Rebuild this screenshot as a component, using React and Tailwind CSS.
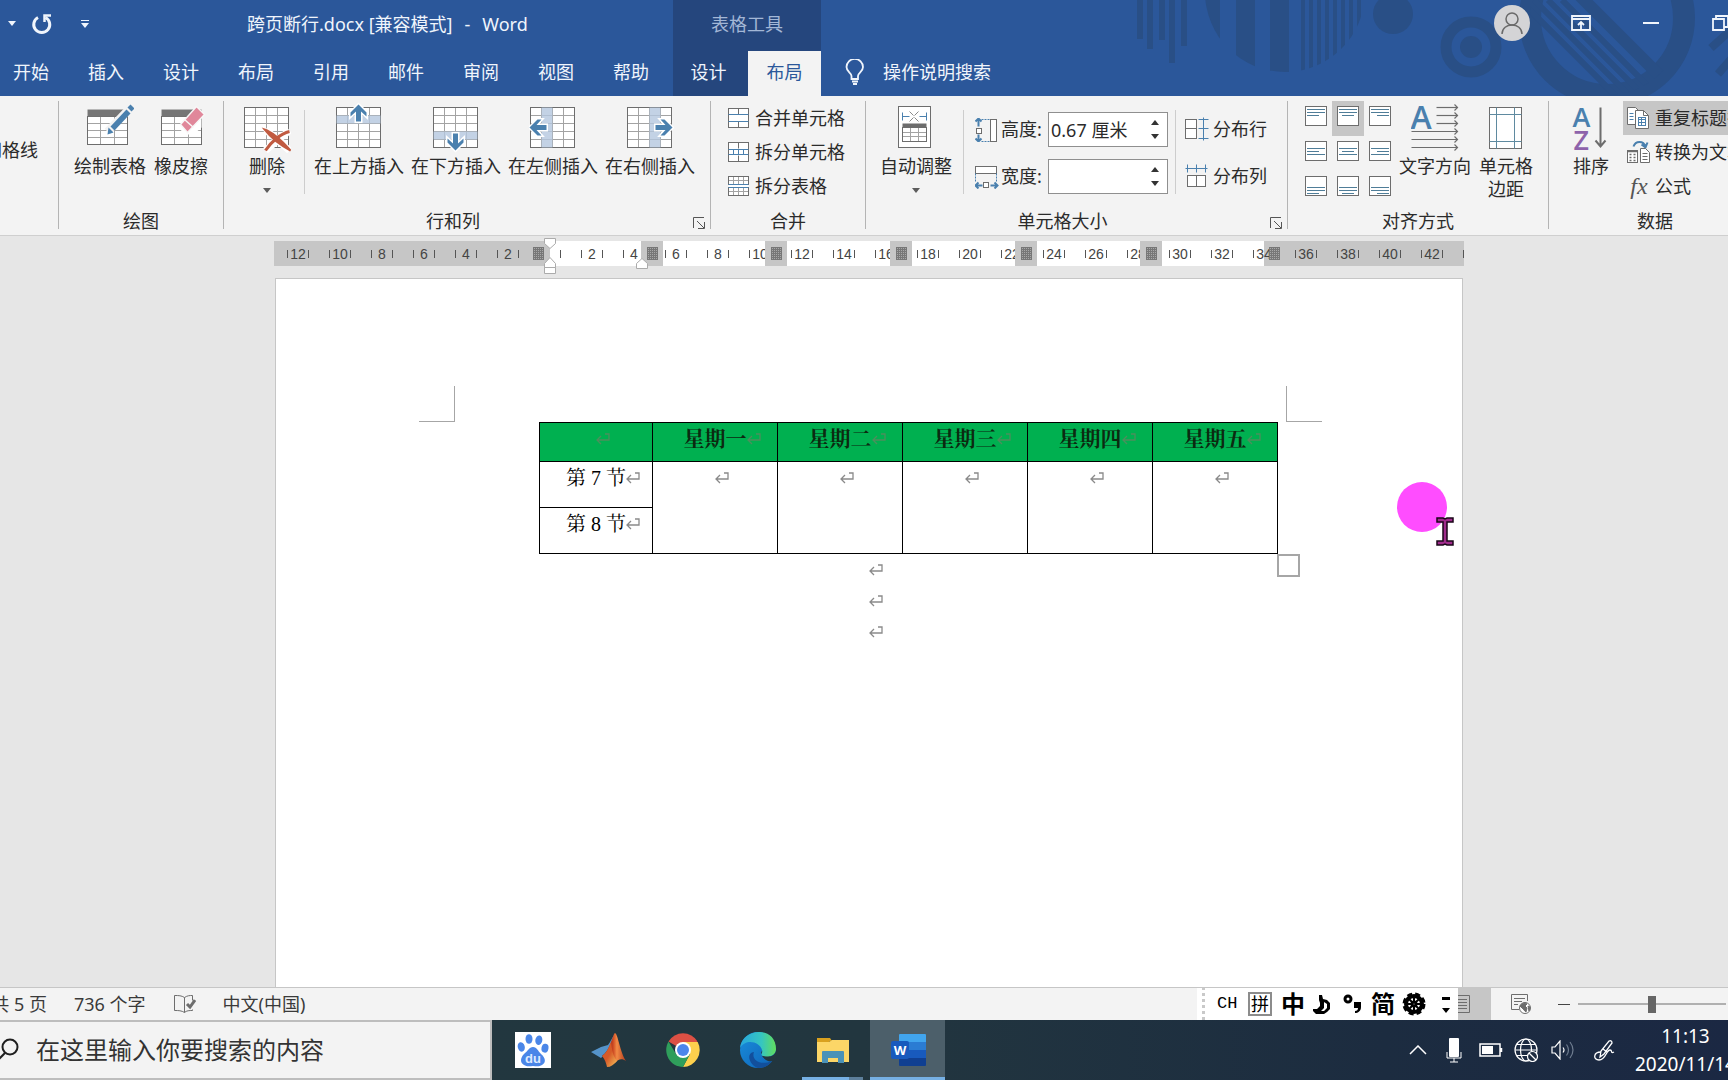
import React, { useState } from "react";

const MENU_TABS = ["开始", "插入", "设计", "布局", "引用", "邮件", "审阅", "视图", "帮助"];
const WEEK_DAYS = ["星期一", "星期二", "星期三", "星期四", "星期五"];

// Ruler numbers run from -12 to 42 in steps of two characters
const RULER_STEPS = Array.from({ length: 29 }, (_, i) => i * 2 - 12);

const INK = "#6d6d6d";
const BLUE = "#4a80ae";

/* ---------- icons ---------- */

const Grid = ({ x, y, w, h, cols, rows, line = "#a3a3a3" }) => (
  <g fill="none">
    {Array.from({ length: cols - 1 }, (_, i) => (
      <path
        key={`c${i}`}
        stroke={line}
        d={`M${Math.round(x + ((i + 1) * w) / cols)} ${y}v${h}`}
      />
    ))}
    {Array.from({ length: rows - 1 }, (_, i) => (
      <path
        key={`r${i}`}
        stroke={line}
        d={`M${x} ${Math.round(y + ((i + 1) * h) / rows)}h${w}`}
      />
    ))}
    <rect x={x} y={y} width={w} height={h} stroke={INK} />
  </g>
);

const BigIcon = ({ children }) => (
  <svg className="h-[54px] w-12 shrink-0" viewBox="0.5 0.5 48 54">
    {children}
  </svg>
);

const DrawTableIcon = () => (
  <BigIcon>
    <rect x="2" y="9" width="40" height="35" fill="#fff" />
    <Grid x={2} y={16} w={40} h={28} cols={3} rows={4} />
    <rect x="2" y="9" width="40" height="7" fill="#767676" />
    <path d="M22 31 45 7" stroke="#f3f3f3" strokeWidth="8" />
    <path d="m25 26 16-17 4 4-16 17z" fill={BLUE} />
    <path d="m23 27 5 5-6 2z" fill={BLUE} />
    <path d="m42 7 3-3 4 4-3 3z" fill={BLUE} />
  </BigIcon>
);

const EraserIcon = () => (
  <BigIcon>
    <rect x="5" y="9" width="40" height="35" fill="#fff" />
    <Grid x={5} y={16} w={40} h={28} cols={3} rows={4} />
    <rect x="5" y="9" width="40" height="7" fill="#767676" />
    <path d="M27 17h18v10l-8 7H24z" fill="#fff" />
    <path d="M24 24 40 6l8 8-17 18z" fill="#e0879a" stroke="#f7f7f7" strokeWidth="1.5" />
    <path d="m28 19 9 8" stroke="#f7f7f7" strokeWidth="1.5" />
  </BigIcon>
);

const DeleteIcon = () => (
  <BigIcon>
    <rect x="2" y="7" width="44" height="40" fill="#fff" />
    <Grid x={2} y={7} w={44} h={40} cols={4} rows={5} />
    <path d="m23 29 24 21M47 30 23 50" stroke="#fff" strokeWidth="7" />
    <path d="M22 29c9 3 18 12 26 21-10-5-19-12-26-21z" fill="#c15b41" stroke="#c15b41" strokeWidth="2" />
    <path d="M47 31c-9 2-19 11-24 19" fill="none" stroke="#c15b41" strokeWidth="3" />
  </BigIcon>
);

const UP_ARROW = "M0 -8 8 0V4L2.500 -1V9h-5V-1L-8 4V0z";

const InsertIcon = ({ side }) => {
  const band = {
    top: [2, 15, 44, 8],
    bottom: [2, 31, 44, 8],
    left: [13, 7, 11, 40],
    right: [24, 7, 11, 40],
  }[side];
  const arrow = {
    top: "translate(24 12)",
    bottom: "translate(24 42) rotate(180)",
    left: "translate(9 27) rotate(-90)",
    right: "translate(39 27) rotate(90)",
  }[side];
  return (
    <BigIcon>
      <rect x="2" y="7" width="44" height="40" fill="#fff" />
      <Grid x={2} y={7} w={44} h={40} cols={4} rows={5} />
      <rect x={band[0]} y={band[1]} width={band[2]} height={band[3]} fill="#b4c7df" fillOpacity="0.8" />
      <path d={UP_ARROW} transform={arrow} fill={BLUE} stroke="#fff" strokeWidth="3" paintOrder="stroke" />
    </BigIcon>
  );
};

const AutoFitIcon = () => (
  <BigIcon>
    <rect x="7" y="6" width="32" height="41" fill="#fff" stroke={INK} />
    <path d="M11 12v8M35 12v8M11 16h7M35 16h-7" stroke={BLUE} />
    <path d="m18 11 4 4M27 11l-4 4M18 21l4-4M27 21l-4-4" stroke="#8a8a8a" />
    <rect x="11" y="23" width="24" height="4" fill="#6d6d6d" />
    <Grid x={11} y={27} w={24} h={14} cols={3} rows={3} />
  </BigIcon>
);

const TextDirectionIcon = () => (
  <BigIcon>
    <text x="0" y="28" fontSize="32" fontWeight="600" fill={BLUE} fontFamily="'Open Sans', sans-serif">
      A
    </text>
    {[7, 15, 23, 31, 39, 47].map((y, i) => (
      <g key={y} stroke={INK} strokeWidth="1.200" fill="none">
        <path d={i < 3 ? `M26 ${y}h21` : `M1 ${y}h46`} />
        <path d={`m44 ${y - 3} 3 3-3 3`} />
      </g>
    ))}
  </BigIcon>
);

const CellMarginIcon = () => (
  <BigIcon>
    <rect x="8" y="7" width="32" height="41" fill="#fff" stroke={INK} />
    <path d="M15 7v41M33 7v41M8 14h32M8 41h32" stroke="#5f8aa0" />
  </BigIcon>
);

const SortIcon = () => (
  <BigIcon>
    <g fontFamily="'Open Sans', sans-serif" fontSize="27" fontWeight="600">
      <text x="6" y="26" fill={BLUE}>
        A
      </text>
      <text x="7" y="49" fill="#8e63ab">
        Z
      </text>
    </g>
    <path d="M34 7v38M29 40l5 6 5-6" fill="none" stroke="#6d6d6d" strokeWidth="2" />
  </BigIcon>
);

const SmallIcon = ({ children }) => (
  <svg className="h-6 w-6 shrink-0" viewBox="0.5 0.5 24 24">
    {children}
  </svg>
);

const MergeCellsIcon = () => (
  <SmallIcon>
    <rect x="2" y="3" width="20" height="19" fill="#fff" stroke={INK} />
    <path d="M12 3v6M12 16v6" stroke={INK} />
    <path d="M2 9h20M2 16h20" stroke={BLUE} />
  </SmallIcon>
);

const SplitCellsIcon = () => (
  <SmallIcon>
    <rect x="2" y="3" width="20" height="19" fill="#fff" stroke={INK} />
    <path d="M12 3v6M12 16v6" stroke={INK} />
    <path d="M2 10h20M2 15h20M7 10v5M12 10v5M17 10v5" stroke={BLUE} />
  </SmallIcon>
);

const SplitTableIcon = () => (
  <SmallIcon>
    <rect x="2" y="3" width="20" height="19" fill="#fff" />
    <Grid x={2} y={3} w={20} h={8} cols={4} rows={2} />
    <Grid x={2} y={14} w={20} h={8} cols={4} rows={2} />
    <path d="M2 11h20M2 14h20" stroke={BLUE} />
  </SmallIcon>
);

const RowHeightIcon = () => (
  <SmallIcon>
    <path d="M4 1v8M4 17v7M1 4l3-3 3 3M1 21l3 3 3-3" fill="none" stroke={BLUE} strokeWidth="2" />
    <rect x="2" y="11" width="5" height="5" fill="#fff" stroke={INK} />
    <path d="M7 2h9M7 24h9" stroke={BLUE} strokeDasharray="2 1" />
    <rect x="16" y="2" width="6" height="22" fill="#fff" stroke={INK} />
  </SmallIcon>
);

const ColWidthIcon = () => (
  <SmallIcon>
    <rect x="1" y="2" width="21" height="7" fill="#fff" stroke={INK} />
    <path d="M1 9v9M22 9v9" stroke={BLUE} strokeDasharray="2 1" />
    <path d="M1 21h7M16 21h7M4 18l-3 3 3 3M20 18l3 3-3 3" fill="none" stroke={BLUE} strokeWidth="2" />
    <rect x="9" y="18" width="5" height="5" fill="#fff" stroke={INK} />
  </SmallIcon>
);

const DistributeRowsIcon = () => (
  <SmallIcon>
    <rect x="1" y="3" width="11" height="19" fill="#fff" stroke={INK} />
    <path d="M1 12h11" stroke={INK} />
    <path d="M19 1v23M14 3h10M14 12h10M14 22h10" stroke={BLUE} />
  </SmallIcon>
);

const DistributeColsIcon = () => (
  <SmallIcon>
    <path d="M1 5h22M3 1v8M12 1v8M21 1v8" stroke={BLUE} />
    <rect x="3" y="12" width="18" height="11" fill="#fff" stroke={INK} />
    <path d="M12 12v11" stroke={INK} />
  </SmallIcon>
);

// Line layouts for the nine alignment buttons
const ALIGN_LINES = {
  top: [3, 6, 9],
  middle: [7, 10, 13],
  bottom: [11, 14, 17],
};

const AlignIcon = ({ v, h }) => (
  <svg className="h-5 w-[22px]" viewBox="0 0 22 20">
    <rect x="0.5" y="0.500" width="21" height="19" fill="#fff" stroke={INK} />
    {ALIGN_LINES[v].map((y, i) => {
      const w = v === "middle" ? (i === 1 ? 12 : 18) : i === 1 ? 18 : i === 0 ? 18 : 12;
      const x = h === "left" ? 2 : h === "right" ? 20 - w : 11 - w / 2;
      return <path key={y} d={`M${x} ${y + 0.5}h${w}`} stroke="#4f7d98" />;
    })}
  </svg>
);

const RepeatHeaderIcon = () => (
  <SmallIcon>
    <path d="M1 2h8l3 3v14H1z" fill="#fff" stroke={INK} />
    <path d="M3 8h4M3 11h4M3 14h4" stroke={BLUE} />
    <path d="M9 5h8l5 5v13H9z" fill="#fff" stroke={INK} />
    <path d="M17 5v5h5" fill="none" stroke={INK} />
    <rect x="12" y="12" width="7" height="8" fill="none" stroke={BLUE} />
    <path d="M12 14h7M12 17h7M15 12v8" stroke={BLUE} />
  </SmallIcon>
);

const ConvertTextIcon = () => (
  <SmallIcon>
    <path d="M7 7c2-6 10-6 12 0M15 5l4 3 2-5" fill="none" stroke={BLUE} strokeWidth="2" />
    <rect x="1" y="11" width="10" height="12" fill="#fff" stroke={INK} />
    <path d="M1 12h10M3 15h2M7 15h2M3 18h2M7 18h2M3 21h2M7 21h2" stroke={INK} strokeWidth="1.5" />
    <path d="M14 9h5l4 4v10h-9z" fill="#fff" stroke={INK} />
    <path d="M16 14h5M16 17h5M16 20h5" stroke={INK} />
  </SmallIcon>
);

const EnterMark = ({ className = "text-[#8a8a8a]" }) => (
  <span className="inline-block w-0">
    <svg
      className={`h-3 w-[14px] max-w-none ${className}`}
      viewBox="0 0 14 12"
      fill="none"
      stroke="currentColor"
      strokeWidth="1.3"
    >
      <path d="M9 1h4v6H1M5 3 1 7l4 4" />
    </svg>
  </span>
);

/* ---------- ribbon pieces ---------- */

const LargeButton = ({ icon, label, caret, className = "" }) => (
  <button className={`flex shrink-0 flex-col items-center ${className}`}>
    {icon}
    <span className="leading-[23px] whitespace-pre">{label}</span>
    {caret && (
      <svg className="mt-[10px] h-[5px] w-2" viewBox="0 0 8 5">
        <path d="m0 0 4 5 4-5z" fill="#5c5c5c" />
      </svg>
    )}
  </button>
);

const SmallButton = ({ icon, label, className = "" }) => (
  <button className={`flex h-[34px] items-center gap-1 pb-px whitespace-nowrap ${className}`}>
    {icon}
    <span>{label}</span>
  </button>
);

const Launcher = () => (
  <button aria-label="更多选项" className="absolute right-[5px] bottom-[6px]">
    <svg className="h-3 w-3" viewBox="0 0 12 12" fill="none" stroke="#555">
      <path d="M0.500 11V0.500H11M4 4l7 7M11.500 5v6.500H5" />
    </svg>
  </button>
);

const Group = ({ label, className, launcher, children }) => (
  <>
    <section className={`relative flex shrink-0 flex-col pt-[5px] ${className}`}>
      <div className="flex h-[109px] items-start">{children}</div>
      <div className={`h-[22px] text-center leading-[22px] ${launcher ? "pr-7" : ""}`}>{label}</div>
      {launcher && <Launcher />}
    </section>
    <div className="mt-[5px] mb-[6px] w-px shrink-0 bg-[#b4b4b4] last:hidden" />
  </>
);

const ShortLine = ({ className }) => (
  <div className={`mt-[9px] h-[84px] w-px shrink-0 bg-[#cdcdcd] ${className}`} />
);

const SizeField = ({ id, icon, label, value, onChange }) => (
  <div className="flex h-[35px] items-center">
    {icon}
    <label htmlFor={id} className="ml-[2px] w-[47px] pb-[2px]">
      {label}
    </label>
    <div className="flex h-[35px] w-[120px] border border-[#8f8f8f] bg-white">
      <input
        id={id}
        value={value}
        onChange={(e) => onChange(e.target.value)}
        className="w-24 min-w-0 bg-transparent px-[2px] outline-none"
      />
      <div className="flex w-6 flex-col items-center justify-center gap-[9px]">
        <button aria-label="增加">
          <svg className="h-[5px] w-2" viewBox="0 0 8 5">
            <path d="M0 5 4 0l4 5z" fill="#333" />
          </svg>
        </button>
        <button aria-label="减少">
          <svg className="h-[5px] w-2" viewBox="0 0 8 5">
            <path d="m0 0 4 5 4-5z" fill="#333" />
          </svg>
        </button>
      </div>
    </div>
  </div>
);

/* ---------- header ---------- */

const HeaderArt = () => (
  <svg className="absolute top-0 right-0 h-24 w-[600px]" viewBox="1128 0 600 96">
    <defs>
      <clipPath id="stripeDisc">
        <circle cx="1285" cy="-8" r="80" />
      </clipPath>
      <clipPath id="bigDisc">
        <circle cx="1607" cy="18" r="77" />
      </clipPath>
    </defs>
    <g fill="#294f86">
      <path d="M1137 0h6v39h-6zM1147 0h6v49h-6zM1159 0h6v40h-6zM1169 0h6v63h-6zM1181 0h6v46h-6z" />
      <g clipPath="url(#stripeDisc)">
        <path d="M1200 0h20v72h-20zM1236 0h19v72h-19zM1270 0h19v72h-19z" />
        {[1301, 1309, 1317, 1325, 1333, 1341, 1349, 1357].map((x) => (
          <rect key={x} x={x} y="0" width="4" height="72" />
        ))}
      </g>
      <circle cx="1393" cy="14" r="20" />
      <circle cx="1471" cy="47" r="11" />
    </g>
    <g fill="none" stroke="#294f86">
      <circle cx="1471" cy="47" r="25" strokeWidth="11" />
      <circle cx="1607" cy="18" r="77" strokeWidth="22" />
      <g clipPath="url(#bigDisc)" strokeWidth="6">
        <path d="m1520 0 100 100M1534 0l100 100M1548 0l100 100M1562 0l100 100" />
        <path d="m1580-4 100 100" strokeWidth="12" />
      </g>
      <path d="m1711 48 20-18M1718 74l14-16" strokeWidth="8" />
    </g>
  </svg>
);

const Header = () => (
  <header className="relative flex h-24 shrink-0 overflow-hidden bg-[#2b579a] text-[#f0f5fc]">
    <HeaderArt />
    <div className="relative w-[673px] shrink-0">
      <div className="flex h-[51px] items-center pb-1">
        <button aria-label="撤消选项" className="ml-2 w-2">
          <svg className="h-[5px] w-2" viewBox="0 0 8 5">
            <path d="m0 0 4 5 4-5z" fill="currentColor" />
          </svg>
        </button>
        <button aria-label="重复" className="ml-[15px]">
          <svg className="h-[22px] w-[22px]" viewBox="0 0 22 22" fill="none" stroke="currentColor" strokeWidth="3">
            <path d="M7 4.500a8 8 0 1 0 7.500 0" />
            <path d="M20 2.500h-6.500V9" strokeWidth="2.500" />
          </svg>
        </button>
        <button aria-label="自定义快速访问工具栏" className="ml-7">
          <svg className="h-2 w-2" viewBox="0 0 8 8" fill="currentColor">
            <path d="M0 0h8v1H0zM0 3h8L4 8z" />
          </svg>
        </button>
        <h1 className="ml-[158px] flex gap-3 whitespace-nowrap">
          <span>跨页断行.docx [兼容模式]</span>
          <span>-</span>
          <span>Word</span>
        </h1>
      </div>
      <nav className="flex h-[45px] items-center gap-[39px] pb-1 pl-[13px]">
        {MENU_TABS.map((tab) => (
          <button key={tab} className="w-9 shrink-0">
            {tab}
          </button>
        ))}
      </nav>
    </div>
    <div className="relative w-[148px] shrink-0 bg-[#25467d]">
      <div className="flex h-[51px] items-center justify-center pb-1 text-[#a3b7d6]">表格工具</div>
      <div className="flex h-[45px]">
        <button className="w-[75px] pr-1 pb-1">设计</button>
        <button className="w-[73px] bg-[#f3f3f3] pb-1 text-[#2b579a]">布局</button>
      </div>
    </div>
    <div className="relative flex min-w-0 flex-1 flex-col overflow-hidden">
      <div className="flex h-[51px] shrink-0 items-center justify-end pb-[5px]">
        <button aria-label="账户" className="h-9 w-9 rounded-full bg-[#d4d4d6]">
          <svg className="h-9 w-9" viewBox="0 0 36 36" fill="none" stroke="#6a6a6a" strokeWidth="1.500">
            <circle cx="18" cy="14" r="6" />
            <path d="M8 29c0-12 20-12 20 0" />
          </svg>
        </button>
        <button aria-label="功能区显示选项" className="ml-[41px]">
          <svg className="h-4 w-5" viewBox="0 0 20 16" fill="none" stroke="currentColor" strokeWidth="1.800">
            <path d="M1 1h18v14H1zM1 4h18M10 14V7M7 10l3-3 3 3" />
          </svg>
        </button>
        <button aria-label="最小化" className="ml-[52px] flex h-4 w-4 items-center">
          <span className="h-[2px] w-full bg-current" />
        </button>
        <button aria-label="还原" className="ml-[53px] h-4 w-4">
          <svg className="h-4 w-4" viewBox="0 0 16 16" fill="none" stroke="currentColor" strokeWidth="1.800">
            <path d="M1 4h11v11H1zM4 4V1h12v11h-4" />
          </svg>
        </button>
      </div>
      <button className="flex h-[45px] items-center gap-[18px] pb-1 pl-6">
        <svg className="h-[26px] w-5" viewBox="0 0 20 26" fill="none" stroke="currentColor" strokeWidth="1.800">
          <path d="M6.500 20v-3c0-3-5-4-5-9a8.200 8 0 0 1 16.500 0c0 5-5 6-5 9v3z" />
          <path d="M7 22.500h6M8 25h4" />
        </svg>
        <span>操作说明搜索</span>
      </button>
    </div>
  </header>
);

/* ---------- ribbon ---------- */

const Ribbon = () => {
  const [height, setHeight] = useState("0.67 厘米");
  const [width, setWidth] = useState("");

  return (
    <div className="flex h-[140px] shrink-0 overflow-hidden border-b border-[#cfcfcf] bg-[#f3f3f3] text-[#2b2b2b]">
      <Group label="" className="w-[58px]">
        <button className="flex h-[98px] w-[38px] items-center justify-end whitespace-nowrap">网格线</button>
      </Group>

      <Group label="绘图" className="w-[164px]">
        <LargeButton icon={<DrawTableIcon />} label="绘制表格" className="ml-[15px]" />
        <LargeButton icon={<EraserIcon />} label="橡皮擦" className="ml-2" />
      </Group>

      <Group label="行和列" className="w-[486px]" launcher>
        <LargeButton icon={<DeleteIcon />} label="删除" caret className="ml-[19px] w-12" />
        <ShortLine className="ml-[13px]" />
        <div className="ml-[9px] flex gap-[7px]">
          <LargeButton icon={<InsertIcon side="top" />} label="在上方插入" />
          <LargeButton icon={<InsertIcon side="bottom" />} label="在下方插入" />
          <LargeButton icon={<InsertIcon side="left" />} label="在左侧插入" />
          <LargeButton icon={<InsertIcon side="right" />} label="在右侧插入" />
        </div>
      </Group>

      <Group label="合并" className="w-[154px]">
        <div className="ml-4 flex flex-col">
          <SmallButton icon={<MergeCellsIcon />} label="合并单元格" />
          <SmallButton icon={<SplitCellsIcon />} label="拆分单元格" />
          <SmallButton icon={<SplitTableIcon />} label="拆分表格" />
        </div>
      </Group>

      <Group label="单元格大小" className="w-[421px]" launcher>
        <LargeButton icon={<AutoFitIcon />} label="自动调整" caret className="ml-[14px]" />
        <ShortLine className="ml-[11px]" />
        <div className="mt-[11px] ml-[11px] flex flex-col gap-3">
          <SizeField id="row-height" icon={<RowHeightIcon />} label="高度:" value={height} onChange={setHeight} />
          <SizeField id="col-width" icon={<ColWidthIcon />} label="宽度:" value={width} onChange={setWidth} />
        </div>
        <ShortLine className="ml-[7px]" />
        <div className="mt-[11px] ml-[9px] flex flex-col gap-[13px]">
          <SmallButton icon={<DistributeRowsIcon />} label="分布行" />
          <SmallButton icon={<DistributeColsIcon />} label="分布列" />
        </div>
      </Group>

      <Group label="对齐方式" className="w-[260px]">
        <div className="ml-3 grid grid-cols-[32px_32px_32px]">
          {["top", "middle", "bottom"].map((v) =>
            ["left", "center", "right"].map((h) => (
              <button
                key={v + h}
                aria-label={`${v} ${h}`}
                className={`flex h-[35px] justify-center pt-[5px] ${
                  v === "top" && h === "center" ? "bg-[#c6c6c6]" : ""
                }`}
              >
                <AlignIcon v={v} h={h} />
              </button>
            ))
          )}
        </div>
        <LargeButton icon={<TextDirectionIcon />} label="文字方向" className="ml-[3px]" />
        <LargeButton icon={<CellMarginIcon />} label={"单元格\n边距"} className="ml-2" />
      </Group>

      <Group label="数据" className="w-[212px]">
        <LargeButton icon={<SortIcon />} label="排序" className="ml-[18px] w-12" />
        <div className="ml-2 flex flex-1 flex-col">
          <SmallButton icon={<RepeatHeaderIcon />} label="重复标题行" className="bg-[#c6c6c6] pl-1" />
          <SmallButton icon={<ConvertTextIcon />} label="转换为文本" className="pl-1" />
          <SmallButton
            icon={
              <span className="w-6 font-['Liberation_Serif',serif] text-2xl leading-6 text-[#555] italic">fx</span>
            }
            label="公式"
            className="pl-1"
          />
        </div>
      </Group>
    </div>
  );
};

/* ---------- ruler ---------- */

const ColumnDots = () => (
  <span className="h-[13px] w-[11px] bg-[#a8a8a8] bg-[repeating-linear-gradient(0deg,#777_0_1px,transparent_1px_2px),repeating-linear-gradient(90deg,#777_0_1px,transparent_1px_2px)]" />
);

const COLUMN_STOPS = [
  "left-[367px]",
  "left-[491px]",
  "left-[616px]",
  "left-[741px]",
  "left-[866px]",
];

const Ruler = () => (
  <div className="relative h-[25px] w-[1190px] shrink-0">
    <div className="flex h-full overflow-hidden bg-[linear-gradient(90deg,#c6c6c6_276px,#fff_276px,#fff_990px,#c6c6c6_990px)] pl-[3px]">
      {RULER_STEPS.map((n) => (
        <span key={n} className="flex w-[42px] shrink-0 items-center justify-center">
          <span className="flex h-2 w-[22px] items-center justify-center border-x border-[#555] font-['Liberation_Sans',sans-serif] text-sm text-[#444]">
            {n === 0 ? "" : Math.abs(n)}
          </span>
        </span>
      ))}
    </div>
    <span className="absolute top-[6px] left-[259px] flex">
      <ColumnDots />
    </span>
    {COLUMN_STOPS.map((pos) => (
      <span
        key={pos}
        className={`absolute top-0 flex h-[25px] w-[22px] items-center justify-center bg-[#c6c6c6] ${pos}`}
      >
        <ColumnDots />
      </span>
    ))}
    <span className="absolute top-[6px] left-[995px] flex">
      <ColumnDots />
    </span>
    <svg
      className="absolute -top-[3px] left-[270px] h-9 w-3"
      viewBox="0 0 12 36"
      fill="#fff"
      stroke="#ababab"
    >
      <path d="M0.500 0.500h11v5L6 10.500 0.500 5.500zM0.500 29.500v-4L6 19.500l5.500 6v4zM0.500 29.500h11v6H0.500z" />
    </svg>
    <svg className="absolute top-[17px] left-[362px] h-[11px] w-3" viewBox="0 0 12 11" fill="#fff" stroke="#ababab">
      <path d="M0.500 10.500v-5L6 0.500l5.500 5v5z" />
    </svg>
  </div>
);

/* ---------- document ---------- */

const Cell = ({ as: Tag = "td", className = "", rowSpan, children, mark }) => (
  <Tag rowSpan={rowSpan} className={`border border-black p-0 align-top ${className}`}>
    <div className="flex h-8 items-center justify-center">
      {children}
      <EnterMark className={mark} />
    </div>
  </Tag>
);

const Timetable = () => (
  <div className="relative ml-[263px] w-[738px] font-['Liberation_Serif','Noto_Serif_CJK_SC','Noto_Sans_CJK_SC',serif] text-black">
    <table className="w-full table-fixed border-collapse">
      <colgroup>
        <col className="w-[113px]" />
        {WEEK_DAYS.map((d) => (
          <col key={d} className="w-[125px]" />
        ))}
      </colgroup>
      <thead>
        <tr className="h-[39px] bg-[#00b050] text-[21px] text-[#0c2a10]">
          <Cell mark="text-[#4c8f5c]" />
          {WEEK_DAYS.map((day) => (
            <Cell key={day} as="th" mark="text-[#4c8f5c]">
              {day}
            </Cell>
          ))}
        </tr>
      </thead>
      <tbody className="text-xl">
        <tr className="h-[46px]">
          <Cell>第 7 节</Cell>
          {WEEK_DAYS.map((day) => (
            <Cell key={day} rowSpan={2} />
          ))}
        </tr>
        <tr className="h-[46px]">
          <Cell>第 8 节</Cell>
        </tr>
      </tbody>
    </table>
    <span className="absolute top-full left-full h-[23px] w-[23px] border-2 border-[#a6a6a6]" />
  </div>
);

const Page = () => (
  <main className="relative mt-3 w-[1188px] flex-1 border border-b-0 border-[#c6c6c6] bg-white pt-[107px]">
    <div className="flex justify-between pr-[140px] pl-[143px]">
      <span className="h-9 w-9 border-r border-b border-[#a6a6a6]" />
      <span className="h-9 w-9 border-b border-l border-[#a6a6a6]" />
    </div>
    <Timetable />
    {[0, 1, 2].map((i) => (
      <p key={i} className="flex h-[31px] items-center justify-center">
        <EnterMark />
      </p>
    ))}
    {/* Mouse pointer with its highlight */}
    <span className="absolute top-[203px] left-[1121px] h-[50px] w-[50px] rounded-full bg-[#ff4dff]" />
    <svg className="absolute top-[238px] left-[1160px] h-[29px] w-[18px]" viewBox="0 0 18 29">
      <path
        d="M1 1h6l2 1 2-1h6v4h-6v19h6v4h-6l-2-1-2 1H1v-4h6V5H1z"
        fill="#a02c8c"
        stroke="#1a0618"
        strokeWidth="1.500"
      />
    </svg>
  </main>
);

/* ---------- status bar ---------- */

const ImeBar = () => (
  <div className="absolute -top-px right-[270px] bottom-0 flex w-[261px] items-center bg-white text-black">
    <span className="ml-[5px] h-full border-l-3 border-dotted border-[#c9c9c9]" />
    <span className="ml-3 w-5 font-['Liberation_Mono',monospace] text-[17px]">CH</span>
    <span className="ml-[11px] flex h-6 w-6 items-center justify-center border-2 border-[#8c8c8c] text-lg leading-5">
      拼
    </span>
    <span className="ml-[9px] text-2xl leading-6 font-bold">中</span>
    <svg className="ml-2 h-5 w-[18px]" viewBox="0 0 18 20">
      <path
        d="M6 1h3l1 4 4 1 3 3v6l-3 3-3 2H3l-3-3v-2h4l3-3V9L6 6zM11 8v6l-3 3h3l3-3v-4z"
        fillRule="evenodd"
      />
    </svg>
    <svg className="ml-3 h-5 w-[19px]" viewBox="0 0 19 20">
      <circle cx="5" cy="5" r="3" fill="none" stroke="#000" strokeWidth="3" />
      <path d="M11 8h7v5c0 4-3 6-6 6v-2c2 0 3-1 3-3h-4z" />
    </svg>
    <span className="ml-[9px] text-2xl leading-6 font-bold">简</span>
    <svg className="ml-[7px] h-6 w-6" viewBox="0 0 24 24" fill="none" stroke="#000">
      <circle cx="12" cy="12" r="8" strokeWidth="4" />
      <circle cx="12" cy="12" r="10" strokeWidth="3" strokeDasharray="5 3" />
      <circle cx="12" cy="12" r="2" strokeWidth="3" />
      <path d="M12 5v4M12 15v4M5 12h4M15 12h4M7 7l3 3M14 14l3 3M17 7l-3 3M7 17l3-3" strokeWidth="2" />
    </svg>
    <svg className="ml-4 h-5 w-2" viewBox="0 0 8 20">
      <path d="M0 3h8v3H0zM0 14h8l-4 5z" />
    </svg>
  </div>
);

const StatusBar = () => (
  <footer className="relative flex h-[33px] shrink-0 items-center overflow-hidden border-t border-[#c6c6c6] bg-[#f3f3f3] whitespace-nowrap text-[#3a3a3a]">
    <span className="flex w-[47px] shrink-0 justify-end">共 5 页</span>
    <span className="ml-[27px]">736 个字</span>
    <button aria-label="校对" className="ml-7">
      <svg className="h-[18px] w-[22px]" viewBox="0 0 22 18" fill="none" stroke="#6d6d6d">
        <path d="M10.500 2.500c-3-2-6-2-10-2v15c4 0 7 0 10 2zM10.500 2.500c3-2 5-2 8-2v5M10.500 17.500c2-2 5-2 8-2v-1" />
        <path d="m13 9 3 3 5-7" strokeWidth="3" />
      </svg>
    </button>
    <span className="ml-[27px]">中文(中国)</span>
    <div className="ml-auto flex h-full shrink-0 items-center">
      <button aria-label="页面视图" className="h-full w-[52px] bg-[#c6c6c6] pl-[14px]">
        <svg className="h-[18px] w-[18px]" viewBox="0 0 18 18" fill="none" stroke="#6d6d6d">
          <path d="M0.500 0.500h16v17H0.500zM3 4.500h11M3 7.500h11M3 10.500h11M3 13.500h11" />
        </svg>
      </button>
      <button aria-label="Web 版式视图" className="ml-5">
        <svg className="h-5 w-5" viewBox="0 0 20 20" fill="none" stroke="#6d6d6d">
          <path d="M8 15.500H0.500V0.500h16V7M3 4.500h11M3 7.500h8M3 10.500h4" />
          <circle cx="14" cy="14" r="5.500" fill="#fff" />
          <path d="M9 12c2-3 5-4 7-2l-2 2 2 2-1 4c-2-1-2-3-4-4zM17 12l2 1-1 4z" fill="#6d6d6d" />
        </svg>
      </button>
      <button aria-label="缩小" className="ml-[27px] h-px w-3 bg-[#444]" />
      <input
        type="range"
        aria-label="缩放"
        defaultValue="50"
        className="mr-[2px] ml-2 h-[2px] w-[148px] appearance-none bg-[#b0b0b0] [&::-webkit-slider-thumb]:h-[17px] [&::-webkit-slider-thumb]:w-2 [&::-webkit-slider-thumb]:appearance-none [&::-webkit-slider-thumb]:bg-[#666]"
      />
    </div>
    <ImeBar />
  </footer>
);

/* ---------- taskbar ---------- */

const BaiduIcon = () => (
  <svg className="h-9 w-9 bg-white" viewBox="0 0 36 36" fill="#4a86e8">
    <ellipse cx="6" cy="15" rx="3.500" ry="4.800" transform="rotate(-15 6 14)" />
    <ellipse cx="14" cy="7" rx="3.500" ry="4.800" />
    <ellipse cx="24" cy="8" rx="3.500" ry="4.800" transform="rotate(10 23 7)" />
    <ellipse cx="30" cy="16" rx="3.500" ry="4.500" transform="rotate(10 29 16)" />
    <path d="M18 15c4 0 5 4 8 7 5 4 5 9 1 11-3 2-6 1-9 1s-6 1-9-1c-4-2-4-7 0-11 4-3 5-7 9-7z" />
    <text x="18" y="31" textAnchor="middle" fontSize="13" fontWeight="bold" fill="#dfeaff" fontFamily="'Liberation Sans', sans-serif">
      du
    </text>
  </svg>
);

const MatlabIcon = () => (
  <svg className="h-9 w-9" viewBox="0 0 36 36">
    <defs>
      <linearGradient id="matlabPeak">
        <stop offset="0.100" stopColor="#5c1a16" />
        <stop offset="0.450" stopColor="#c9431f" />
        <stop offset="0.620" stopColor="#f28a45" />
        <stop offset="1" stopColor="#b23a1c" />
      </linearGradient>
      <linearGradient id="matlabBase" y2="1">
        <stop offset="0.500" stopColor="#d65a28" />
        <stop offset="1" stopColor="#f6c25a" />
      </linearGradient>
    </defs>
    <path d="m1 20 10-5 7-2c3-4 5-9 7-11l-7 17-7 7z" fill="#5593c9" />
    <path d="M12 24c4-3 7-8 9-14 2-5 3-9 4-9 3 1 5 19 11 28-4-3-8-2-11 2z" fill="url(#matlabPeak)" />
    <path d="M12 24c4-3 7-8 9-14 1 8 2 14 6 19-4 4-6 6-10 6-1-4-2-8-5-11z" fill="url(#matlabBase)" />
  </svg>
);

const ChromeIcon = () => (
  <svg className="h-[34px] w-[34px]" viewBox="-17 -17 34 34">
    <path d="M0 0-14.500-8.500A17 17 0 0 1 14.500-8.500z" fill="#dc5044" />
    <path d="M0-8h14.700A17 17 0 0 1 0 17L7 4z" fill="#fdd04d" />
    <path d="M-14.500-8.500-7 4 0 8 7 4 0 17A17 17 0 0 1-14.500-8.500z" fill="#2f9e5b" />
    <circle r="8" fill="#fff" />
    <circle r="6" fill="#4c86ec" />
  </svg>
);

const EdgeIcon = () => (
  <svg className="h-9 w-9" viewBox="0 0 36 36">
    <defs>
      <linearGradient id="edgeTop">
        <stop offset="0" stopColor="#27a6dd" />
        <stop offset="0.600" stopColor="#36c6c0" />
        <stop offset="1" stopColor="#62dd5c" />
      </linearGradient>
      <linearGradient id="edgeSide" y2="1">
        <stop offset="0" stopColor="#1a8fdc" />
        <stop offset="1" stopColor="#0e62b8" />
      </linearGradient>
    </defs>
    <circle cx="18" cy="18" r="18" fill="url(#edgeSide)" />
    <path d="M14 20c-3 8 6 14 18 9-4 6-9 7-14 7-8-2-13-15-4-16z" fill="#124f9c" />
    <path d="M22 22c-3-1 3-4-1-8 4 1 8 14 14 12l-3 3c-4 1-8-1-10-7z" fill="#23373f" />
    <path d="M0 16C2-4 36-7 36 17c0 6-6 9-13 7-3-1 0-3-1-6C20 10 6 6 0 16z" fill="url(#edgeTop)" />
    <path d="M22 24c9 3 14-2 14-6v8l-3 3c-5 0-9-2-11-5z" fill="#23373f" />
  </svg>
);

const ExplorerIcon = () => (
  <svg className="h-[27px] w-8" viewBox="0 0 32 27">
    <path d="M0 1h13l2 3h-2l-2 3H0z" fill="#d9a11f" />
    <path d="M0 5h12l3-2h17v22H0z" fill="#fcd667" />
    <path d="M5 26V15q0-1 1-1h20q1 0 1 1v11h-6v-5H11v5z" fill="#4b92b8" />
  </svg>
);

const WordIcon = () => (
  <svg className="h-[34px] w-9" viewBox="0 0 36 34">
    <path d="M9 2q0-1 1-1h25q1 0 1 1v7H9z" fill="#41a5ee" />
    <path d="M9 9h27v8H9z" fill="#2b7cd3" />
    <path d="M9 17h27v8H9z" fill="#185abd" />
    <path d="M9 25h27v7q0 1-1 1H10q-1 0-1-1z" fill="#103f91" />
    <rect x="1" y="8" width="18" height="18" rx="2" fill="#185abd" />
    <text x="10" y="22" textAnchor="middle" fontSize="13" fontWeight="bold" fill="#fff" fontFamily="'Open Sans', sans-serif">
      W
    </text>
  </svg>
);

const TaskButton = ({ label, icon, className = "" }) => (
  <button aria-label={label} className={`flex h-full w-[75px] items-center justify-center ${className}`}>
    {icon}
  </button>
);

const Tray = () => (
  <div className="ml-auto flex shrink-0 items-center text-white">
    <svg className="h-[10px] w-[18px]" viewBox="0 0 18 10" fill="none" stroke="currentColor" strokeWidth="1.500">
      <path d="m1 9 8-8 8 8" />
    </svg>
    <svg className="ml-[19px] h-[25px] w-4" viewBox="0 0 16 25" fill="currentColor">
      <rect x="3" y="0" width="10" height="19" rx="1" />
      <path d="M1 14v6h14v-6M8 20v4M4 24h8" fill="none" stroke="currentColor" />
    </svg>
    <svg className="ml-[17px] h-[14px] w-6" viewBox="0 0 24 14" fill="none" stroke="currentColor" strokeWidth="1.500">
      <path d="M1 1h20v12H1zM22.500 5v4" />
      <path d="M3 3h11v8H3z" fill="currentColor" stroke="none" />
    </svg>
    <svg className="ml-[11px] h-6 w-6" viewBox="0 0 24 24" fill="none" stroke="currentColor" strokeWidth="1.200">
      <circle cx="12" cy="12" r="11" />
      <ellipse cx="12" cy="12" rx="5.500" ry="11" />
      <path d="M1 12h22M2.500 6.500h19M2.500 17.500h19" />
      <circle cx="18.500" cy="18.500" r="5" fill="#1c2b40" />
      <path d="m15 15 7 7" />
    </svg>
    <svg className="ml-[13px] h-5 w-[23px]" viewBox="0 0 23 20" fill="none" stroke="currentColor" strokeWidth="1.200">
      <path d="M1 7h3l5-6v18l-5-6H1zM12 7.500q2 2.500 0 5" />
      <path d="M15.500 4.500q4 5.500 0 11M19 2q6 8 0 16" stroke="#6f7d90" />
    </svg>
    <svg className="ml-5 h-[22px] w-[21px]" viewBox="0 0 21 22" fill="none" stroke="currentColor" strokeWidth="1.300">
      <path d="M6 18 7 12 15 2q3-1 3 2L10 15zM9 10l4 3" />
      <path d="M7 13c-8 0-8 8-2 8 7 0 7-10 11-10 3 0 0 4 4 2" />
    </svg>
    <div className="-mr-2 ml-5 text-center text-[19px] leading-7">
      <div>11:13</div>
      <div>2020/11/14</div>
    </div>
  </div>
);

const Taskbar = () => (
  <div className="flex h-[60px] shrink-0 overflow-hidden bg-[linear-gradient(90deg,#22383f_0%,#22363f_50%,#1c2c40_80%,#1b2843_100%)]">
    <label className="flex w-[492px] shrink-0 items-center border-2 border-l-0 border-[#bdbdbd] bg-[#f3f3f3]">
      <svg className="h-6 w-[19px]" viewBox="2 0 19 24" fill="none" stroke="#1f1f1f" strokeWidth="2">
        <circle cx="12" cy="9" r="7.500" />
        <path d="m7 15-8 8" />
      </svg>
      <input
        aria-label="搜索"
        placeholder="在这里输入你要搜索的内容"
        className="ml-[17px] min-w-0 flex-1 bg-transparent text-2xl outline-none placeholder:text-[#333]"
      />
    </label>
    <div className="flex shrink-0 pl-[3px]">
      <TaskButton label="百度" icon={<BaiduIcon />} />
      <TaskButton label="MATLAB" icon={<MatlabIcon />} />
      <TaskButton label="Chrome" icon={<ChromeIcon />} />
      <TaskButton label="Edge" icon={<EdgeIcon />} />
      <TaskButton
        label="文件资源管理器"
        icon={<ExplorerIcon />}
        className="bg-[linear-gradient(90deg,transparent_7px,#76b0e4_7px,#76b0e4_54px,#5d7f9b_54px,#5d7f9b_68px,transparent_68px)] bg-[length:100%_3px] bg-bottom bg-no-repeat"
      />
      <TaskButton label="Word" icon={<WordIcon />} className="border-b-3 border-[#76b0e4] bg-[#4c5f6a] pt-[3px]" />
    </div>
    <Tray />
  </div>
);

const App = () => {
  return (
    <div className="flex h-screen min-h-[700px] flex-col overflow-hidden bg-[#e6e6e6] font-['Noto_Sans','Noto_Sans_CJK_SC',sans-serif] text-lg leading-6">
      <Header />
      <Ribbon />
      <div className="flex min-h-0 flex-1 flex-col items-center overflow-hidden pt-[5px] pl-[10px]">
        <Ruler />
        <Page />
      </div>
      <StatusBar />
      <Taskbar />
    </div>
  );
};

export default App;
